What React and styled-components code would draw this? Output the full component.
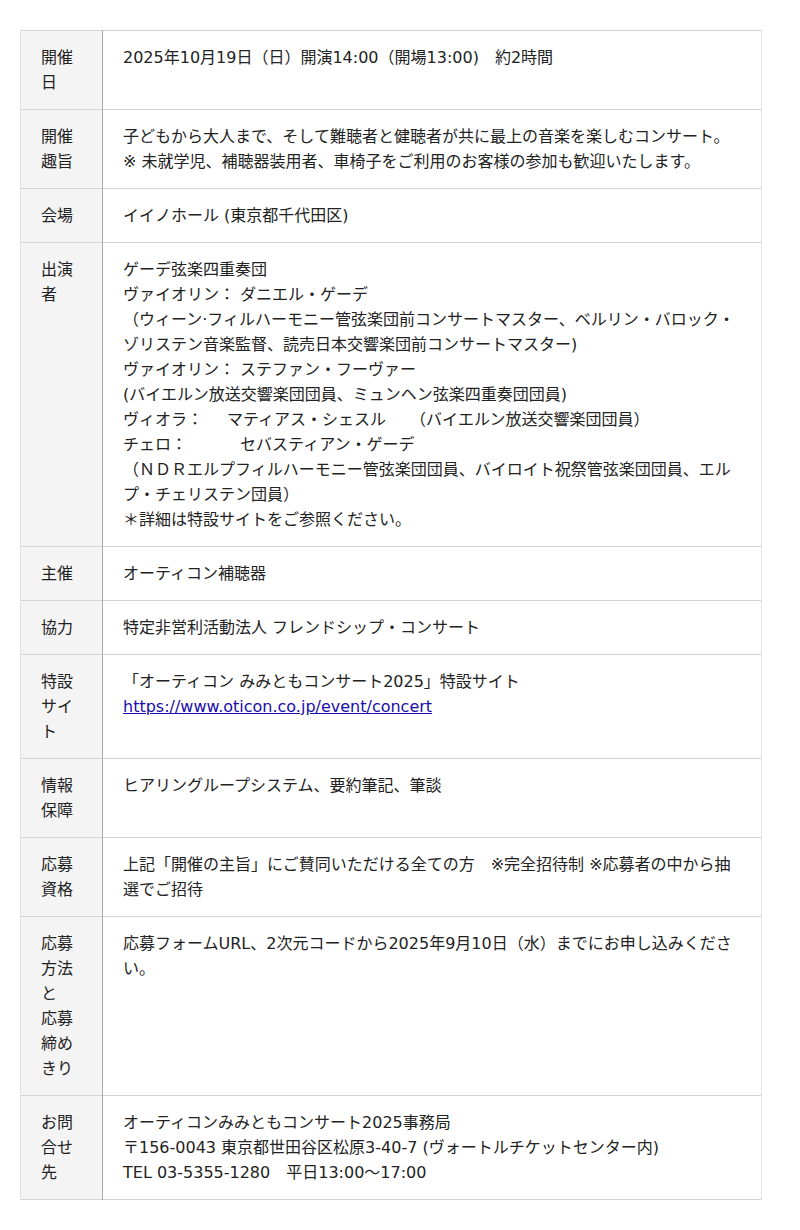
import styled, { createGlobalStyle } from "styled-components";

const GlobalStyle = createGlobalStyle`
  body {
    margin: 0;
    background: #fff;
    font-family: "DejaVu Sans", "Noto Sans CJK JP", sans-serif;
    color: #222;
  }
`;

const Page = styled.div`
  padding: 30px 38px 30px 20px;
`;

const Table = styled.table`
  width: 742px;
  border-collapse: collapse;
  font-family: "DejaVu Sans", "Noto Sans CJK JP", sans-serif;
  font-size: 16px;
  line-height: 25px;
  color: #222;
`;

const Row = styled.tr`
  border-top: 1px solid #d4d4d4;
  border-bottom: 1px solid #d4d4d4;
`;

const Label = styled.th`
  width: 41px;
  padding: 14px 20px;
  background: #f4f4f4;
  border-left: 1px solid #e2e2e2;
  border-right: 1px solid #a8a8a8;
  font-weight: normal;
  text-align: left;
  vertical-align: top;
  word-break: break-all;
`;

const Cell = styled.td`
  padding: 14px 20px;
  border-right: 1px solid #e2e2e2;
  vertical-align: top;
  text-align: left;
`;

const Link = styled.a`
  color: #1a0dab;
  text-decoration: underline;
`;

const rows = [
  ["開催日", ["2025年10月19日（日）開演14:00（開場13:00)　約2時間"]],
  [
    "開催趣旨",
    [
      "子どもから大人まで、そして難聴者と健聴者が共に最上の音楽を楽しむコンサート。",
      "※ 未就学児、補聴器装用者、車椅子をご利用のお客様の参加も歓迎いたします。",
    ],
  ],
  ["会場", ["イイノホール (東京都千代田区)"]],
  [
    "出演者",
    [
      "ゲーデ弦楽四重奏団",
      "ヴァイオリン： ダニエル・ゲーデ",
      "（ウィーン·フィルハーモニー管弦楽団前コンサートマスター、ベルリン・バロック・ゾリステン音楽監督、読売日本交響楽団前コンサートマスター)",
      "ヴァイオリン： ステファン・フーヴァー",
      "(バイエルン放送交響楽団団員、ミュンヘン弦楽四重奏団団員)",
      "ヴィオラ：　\u2002マティアス・シェスル　\u2002（バイエルン放送交響楽団団員）",
      "チェロ：　　　\u00a0セバスティアン・ゲーデ",
      "（ＮＤＲエルプフィルハーモニー管弦楽団団員、バイロイト祝祭管弦楽団団員、エルプ・チェリステン団員）",
      "＊詳細は特設サイトをご参照ください。",
    ],
  ],
  ["主催", ["オーティコン補聴器"]],
  ["協力", ["特定非営利活動法人 フレンドシップ・コンサート"]],
  ["特設サイト", ["「オーティコン みみともコンサート2025」特設サイト", "link"]],
  ["情報保障", ["ヒアリングループシステム、要約筆記、筆談"]],
  [
    "応募資格",
    ["上記「開催の主旨」にご賛同いただける全ての方　※完全招待制 ※応募者の中から抽選でご招待"],
  ],
  [
    ["応募方法と", "応募締めきり"],
    ["応募フォームURL、2次元コードから2025年9月10日（水）までにお申し込みください。"],
  ],
  [
    "お問合せ先",
    [
      "オーティコンみみともコンサート2025事務局",
      "〒156-0043 東京都世田谷区松原3-40-7 (ヴォートルチケットセンター内)",
      "TEL 03-5355-1280　平日13:00～17:00",
    ],
  ],
];

const Lines = ({ lines }) =>
  lines.map((line, i) => (
    <span key={i}>
      {i > 0 && <br />}
      {line}
    </span>
  ));

const App = () => {
  return (
    <>
      <GlobalStyle />
      <Page>
        <Table>
          <tbody>
            {rows.map(([label, body], i) => (
              <Row key={i}>
                <Label>{Array.isArray(label) ? <Lines lines={label} /> : label}</Label>
                <Cell>
                  {body.map((line, j) => (
                    <span key={j}>
                      {j > 0 && <br />}
                      {line === "link" ? (
                        <Link href="#">https://www.oticon.co.jp/event/concert</Link>
                      ) : (
                        line
                      )}
                    </span>
                  ))}
                </Cell>
              </Row>
            ))}
          </tbody>
        </Table>
      </Page>
    </>
  );
};

export default App;
